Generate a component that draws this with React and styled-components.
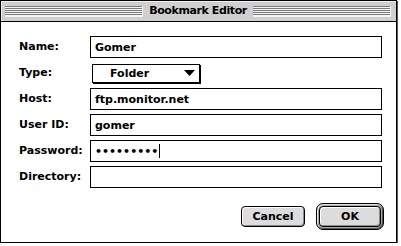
import React from "react";
import styled, { createGlobalStyle } from "styled-components";

const GlobalStyle = createGlobalStyle`
  html, body {
    margin: 0;
    padding: 0;
    background: #fff;
  }
  body {
    font-family: "DejaVu Sans", "Liberation Sans", sans-serif;
    font-size: 11px;
    font-weight: bold;
    color: #000;
  }
`;

const Window = styled.div`
  width: 397px;
  height: 243px;
  box-sizing: border-box;
  border: 1px solid #000;
  box-shadow: 1px 1px 0 #555;
  background: #fff;
  display: flex;
  flex-direction: column;
`;

const TitleBar = styled.div`
  height: 21px;
  box-sizing: border-box;
  border-bottom: 1px solid #000;
  background: #cfcfcf;
  box-shadow: inset 1px 1px 0 #f2f2f2;
  display: flex;
  align-items: center;
  padding: 0 5px 0 4px;
  gap: 4px;
`;

const Stripes = styled.div`
  flex: 1;
  height: 11px;
  background: repeating-linear-gradient(
    to bottom,
    #7a7a7a 0 1px,
    #f4f4f4 1px 2px
  );
  box-shadow: inset -1px -1px 0 #f4f4f4;
`;

const Title = styled.div`
  font-size: 11px;
  letter-spacing: -0.4px;
  padding: 0 2px;
  line-height: 20px;
`;

const Content = styled.div`
  flex: 1;
  display: flex;
  flex-direction: column;
  padding: 14px 12px 0 18px;
`;

const Form = styled.div`
  display: grid;
  grid-template-columns: 71px 292px;
  grid-auto-rows: 22px;
  row-gap: 4px;
  align-items: center;
`;

const Label = styled.div`
  line-height: 22px;
`;

const Field = styled.div`
  height: 22px;
  box-sizing: border-box;
  border: 1px solid #000;
  padding-left: 4px;
  display: flex;
  align-items: center;
  white-space: nowrap;
`;

const Caret = styled.span`
  display: inline-block;
  width: 1px;
  height: 14px;
  background: #000;
  margin-left: 1px;
`;

const Popup = styled.div`
  margin-left: 2px;
  width: 108px;
  height: 19px;
  box-sizing: border-box;
  border: 1px solid #000;
  box-shadow: 1px 1px 0 #000;
  display: flex;
  align-items: center;
  justify-content: space-between;
  padding: 0 4px 0 17px;
`;

const Arrow = styled.svg`
  width: 11px;
  height: 6px;
`;

const Footer = styled.div`
  margin-top: 15px;
  display: flex;
  justify-content: flex-end;
  align-items: center;
  gap: 11px;
`;

const Button = styled.div`
  width: ${(p) => p.w}px;
  height: 21px;
  box-sizing: border-box;
  border: 1px solid #000;
  border-radius: 4px;
  background: #dcdcdc;
  box-shadow: inset 1px 1px 0 #fff, inset -1px -1px 0 #8c8c8c;
  display: flex;
  align-items: center;
  justify-content: center;
`;

const DefaultRing = styled.div`
  width: 68px;
  height: 27px;
  box-sizing: border-box;
  border: 1px solid #000;
  border-radius: 7px;
  padding: 2px;
  background: #a8a8a8;
  box-shadow: inset 1px 1px 0 #e6e6e6, inset -1px -1px 0 #555;
  display: flex;
`;

const fields = [
  { label: "Name:", value: "Gomer" },
  { label: "Type:", popup: "Folder" },
  { label: "Host:", value: "ftp.monitor.net" },
  { label: "User ID:", value: "gomer" },
  { label: "Password:", value: "•••••••••", caret: true },
  { label: "Directory:", value: "" },
];

export default function App() {
  return (
    <>
      <GlobalStyle />
      <Window>
        <TitleBar>
          <Stripes />
          <Title>Bookmark Editor</Title>
          <Stripes />
        </TitleBar>
        <Content>
          <Form>
            {fields.map((f) => (
              <React.Fragment key={f.label}>
                <Label>{f.label}</Label>
                {f.popup ? (
                  <Popup>
                    <span>{f.popup}</span>
                    <Arrow viewBox="0 0 11 6">
                      <polygon points="0,0 11,0 5.5,6" fill="#000" />
                    </Arrow>
                  </Popup>
                ) : (
                  <Field>
                    {f.value}
                    {f.caret && <Caret />}
                  </Field>
                )}
              </React.Fragment>
            ))}
          </Form>
          <Footer>
            <Button w={64}>Cancel</Button>
            <DefaultRing>
              <Button w={62}>OK</Button>
            </DefaultRing>
          </Footer>
        </Content>
      </Window>
    </>
  );
}
